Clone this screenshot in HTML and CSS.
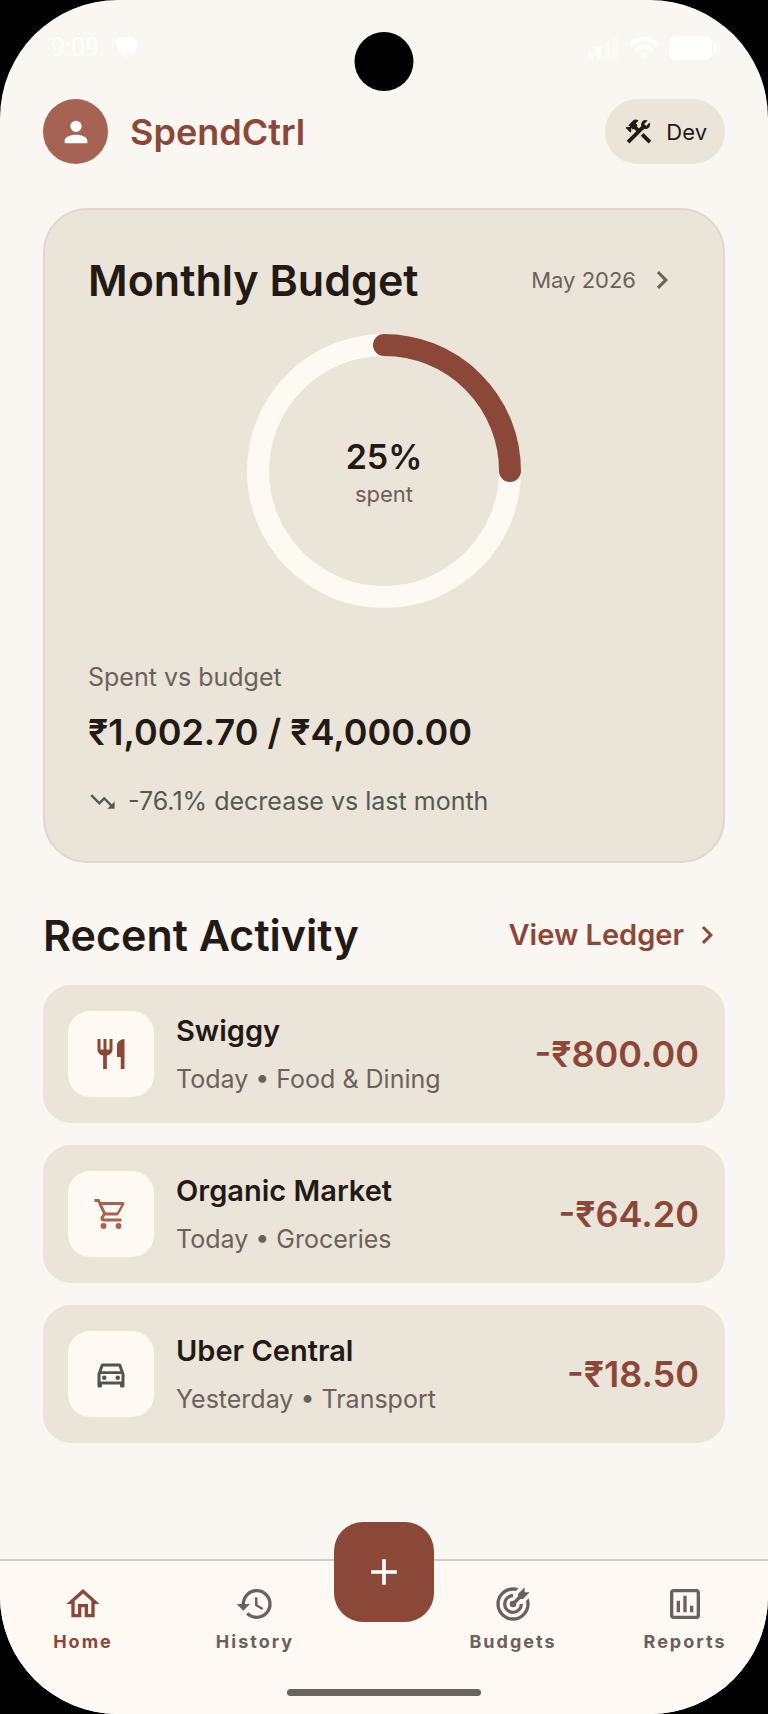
FILE: index.html
```html
<!DOCTYPE html>
<html lang="en">
<head>
    <meta charset="UTF-8">
    <meta name="viewport" content="width=device-width, initial-scale=1.0">
    <title>SpendCtrl</title>
    <link rel="stylesheet" href="styles.css">
</head>
<body>
    <div class="screen">

        <!-- Status bar -->
        <div class="status-bar">
            <span class="clock">9:09</span>
            <svg class="chat-icon" width="24" height="24" viewBox="0 0 24 24"><path d="M1 7C2 3 6 1 11 1h5c4 0 7 4 7 8s-3 8-7 8h-3v5l-6-5C4 15 3 12 3 8L1 7z"/></svg>
            <svg class="signal-icon" width="32" height="24" viewBox="0 0 32 24">
                <rect x="1" y="14" width="5" height="9" rx="2"/>
                <rect x="9" y="10" width="5" height="13" rx="2"/>
                <rect class="faint" x="18" y="5" width="5" height="18" rx="2"/>
                <rect class="faint" x="26" y="1" width="5" height="22" rx="2"/>
            </svg>
            <svg class="wifi-icon" width="30" height="24" viewBox="0 0 30 24">
                <path d="M3 7.500C10 1 20 1 27 7.500M8 13.500c4-4 10-4 14 0" fill="none" stroke="#fff" stroke-width="4" stroke-linecap="round"/>
                <circle cx="15" cy="20" r="3"/>
            </svg>
            <svg class="battery-icon" width="48" height="24" viewBox="0 0 48 24">
                <rect x="0" y="0" width="43" height="24" rx="7"/>
                <path d="M45 7c2 0 3 2 3 5s-1 5-3 5z"/>
            </svg>
        </div>
        <div class="camera"></div>

        <header class="app-header">
            <button class="avatar" aria-label="Profile">
                <svg width="34" height="34" viewBox="0 0 24 24"><path d="M12 4a4 4 0 1 1 0 8 4 4 0 0 1 0-8zm0 10c4.420 0 8 1.790 8 4v2H4v-2c0-2.210 3.580-4 8-4z"/></svg>
            </button>
            <h1>SpendCtrl</h1>
            <button class="dev-button">
                <svg width="31" height="31" viewBox="0 0 24 24"><path d="M13.780 15.300L19.780 21.300L21.890 19.140L15.890 13.140L13.780 15.300M17.500 10.100C17.110 10.100 16.690 10.050 16.360 9.910L4.970 21.250L2.860 19.140L10.270 11.740L8.500 9.960L7.780 10.660L6.330 9.250V12.110L5.630 12.810L2.110 9.250L2.810 8.550H5.620L4.220 7.140L7.780 3.580C8.950 2.410 10.830 2.410 12 3.580L9.890 5.740L11.300 7.140L10.590 7.850L12.380 9.630L14.200 7.750C14.060 7.420 14 7 14 6.630C14 4.660 15.560 3.110 17.500 3.110C18.090 3.110 18.610 3.250 19.080 3.530L16.410 6.200L17.910 7.700L20.580 5.030C20.860 5.500 21 6 21 6.630C21 8.550 19.450 10.100 17.500 10.100Z"/></svg>
                Dev
            </button>
        </header>

        <main>
            <!-- Monthly budget -->
            <section class="budget-card">
                <div class="section-head">
                    <h2>Monthly Budget</h2>
                    <button class="month-button">
                        May 2026
                        <svg width="36" height="36" viewBox="0 0 24 24"><path d="M8.590 16.580L13.170 12L8.590 7.410L10 6L16 12L10 18Z"/></svg>
                    </button>
                </div>

                <div class="ring">
                    <svg width="274" height="274" viewBox="0 0 274 274">
                        <circle class="ring-track" cx="137" cy="137" r="126"/>
                        <path class="ring-value" d="M137 11A126 126 0 0 1 263 137"/>
                    </svg>
                    <div class="ring-text">
                        <strong>25%</strong>
                        <span>spent</span>
                    </div>
                </div>

                <p class="spent-label">Spent vs budget</p>
                <p class="spent-total">₹1,002.70 / ₹4,000.00</p>
                <p class="trend">
                    <svg width="29" height="29" viewBox="0 0 24 24"><path d="M16 18L18.290 15.710L13.410 10.830L9.410 14.830L2 7.410L3.410 6L9.410 12L13.410 8L19.710 14.290L22 12V18H16Z"/></svg>
                    -76.1% decrease vs last month
                </p>
            </section>

            <!-- Recent activity -->
            <section class="activity">
                <div class="section-head">
                    <h2>Recent Activity</h2>
                    <a class="ledger-link" href="#">
                        View Ledger
                        <svg width="36" height="36" viewBox="0 0 24 24"><path d="M8.590 16.580L13.170 12L8.590 7.410L10 6L16 12L10 18Z"/></svg>
                    </a>
                </div>

                <ul class="activity-list">
                    <li class="activity-row">
                        <span class="tile food">
                            <svg width="36" height="36" viewBox="0 0 24 24"><path d="M11 9H9V2H7V9H5V2H3V9C3 11.120 4.660 12.840 6.750 12.970V22H9.250V12.970C11.340 12.840 13 11.120 13 9V2H11V9M16 6V14H18.500V22H21V2C18.240 2 16 4.240 16 6Z"/></svg>
                        </span>
                        <div class="details">
                            <h3>Swiggy</h3>
                            <p>Today • Food &amp; Dining</p>
                        </div>
                        <span class="amount">-₹800.00</span>
                    </li>
                    <li class="activity-row">
                        <span class="tile groceries">
                            <svg width="36" height="36" viewBox="0 0 24 24"><path d="M17 18A2 2 0 0 1 19 20A2 2 0 0 1 17 22C15.890 22 15 21.100 15 20C15 18.890 15.890 18 17 18M1 2H4.270L5.210 4H20A1 1 0 0 1 21 5C21 5.170 20.950 5.340 20.880 5.500L17.300 11.970C16.960 12.580 16.300 13 15.550 13H8.100L7.200 14.630L7.170 14.750A.25 .25 0 0 0 7.420 15H19V17H7C5.890 17 5 16.100 5 15C5 14.650 5.090 14.320 5.240 14.040L6.600 11.590L3 4H1V2M7 18A2 2 0 0 1 9 20A2 2 0 0 1 7 22C5.890 22 5 21.100 5 20C5 18.890 5.890 18 7 18M16 11L18.780 6H6.140L8.500 11H16Z"/></svg>
                        </span>
                        <div class="details">
                            <h3>Organic Market</h3>
                            <p>Today • Groceries</p>
                        </div>
                        <span class="amount">-₹64.20</span>
                    </li>
                    <li class="activity-row">
                        <span class="tile transport">
                            <svg width="36" height="36" viewBox="0 0 24 24"><path fill-rule="evenodd" d="M18.920 6.010C18.720 5.420 18.160 5 17.500 5h-11c-.66 0-1.210 .42-1.420 1.010L3 12v8c0 .55 .45 1 1 1h1c.55 0 1-.45 1-1v-1h12v1c0 .55 .45 1 1 1h1c.55 0 1-.45 1-1v-8zM6.850 7h10.290l1.080 3.110H5.770zM19 17H5v-5h14z"/><circle cx="7.500" cy="14.500" r="1.500"/><circle cx="16.500" cy="14.500" r="1.500"/></svg>
                        </span>
                        <div class="details">
                            <h3>Uber Central</h3>
                            <p>Yesterday • Transport</p>
                        </div>
                        <span class="amount">-₹18.50</span>
                    </li>
                </ul>
            </section>
        </main>

        <!-- Bottom navigation -->
        <footer class="bottom-bar">
            <nav class="tabs">
                <a class="tab active" href="#">
                    <svg width="40" height="40" viewBox="0 0 24 24"><path d="M12 5.690L17 10.190V18H15V12H9V18H7V10.190L12 5.690M12 3L2 12H5V20H11V14H13V20H19V12H22"/></svg>
                    Home
                </a>
                <a class="tab" href="#">
                    <svg width="40" height="40" viewBox="0 0 24 24"><path d="M13.500 8H12V13L16.280 15.540L17 14.330L13.500 12.250V8M13 3A9 9 0 0 0 4 12H1L4.960 16.030L9 12H6A7 7 0 0 1 13 5A7 7 0 0 1 20 12A7 7 0 0 1 13 19C11.070 19 9.320 18.210 8.060 16.940L6.640 18.360C8.270 20 10.500 21 13 21A9 9 0 0 0 22 12A9 9 0 0 0 13 3"/></svg>
                    History
                </a>
                <button class="add-button" aria-label="Add expense">
                    <svg width="44" height="44" viewBox="0 0 24 24"><path d="M19 13H13V19H11V13H5V11H11V5H13V11H19V13Z"/></svg>
                </button>
                <a class="tab" href="#">
                    <svg width="40" height="40" viewBox="0 0 24 24"><path d="M12 2A10 10 0 0 0 2 12A10 10 0 0 0 12 22A10 10 0 0 0 22 12C22 10.840 21.790 9.690 21.390 8.610L19.790 10.210C19.930 10.800 20 11.400 20 12A8 8 0 0 1 12 20A8 8 0 0 1 4 12A8 8 0 0 1 12 4C12.600 4 13.200 4.070 13.790 4.210L15.400 2.600C14.310 2.210 13.160 2 12 2M19 2L15 6V7.500L12.450 10.050C12.300 10 12.150 10 12 10A2 2 0 0 0 10 12A2 2 0 0 0 12 14A2 2 0 0 0 14 12C14 11.850 14 11.700 13.950 11.550L16.500 9H18L22 5H19V2M12 6A6 6 0 0 0 6 12A6 6 0 0 0 12 18A6 6 0 0 0 18 12H16A4 4 0 0 1 12 16A4 4 0 0 1 8 12A4 4 0 0 1 12 8V6Z"/></svg>
                    Budgets
                </a>
                <a class="tab" href="#">
                    <svg width="40" height="40" viewBox="0 0 24 24"><path fill-rule="evenodd" d="M9 17H7V10H9V17M13 17H11V7H13V17M17 17H15V13H17V17M19 19H5V5H19V19M19 3H5C3.900 3 3 3.900 3 5V19C3 20.100 3.900 21 5 21H19C20.100 21 21 20.100 21 19V5C21 3.900 20.100 3 19 3Z"/></svg>
                    Reports
                </a>
            </nav>
            <div class="home-indicator"></div>
        </footer>
    </div>
</body>
</html>
```

FILE: styles.css
```css
* {
    box-sizing: border-box;
}
body {
    margin: 0;
    background-color: #000;
    color: #231a16;
    font-family: Inter, "Liberation Sans", sans-serif;
    font-size: 25px;
    line-height: 36px;
}
h1, h2, h3, p, ul {
    margin: 0;
    padding: 0;
}
button {
    padding: 0;
    border: none;
    background: none;
    color: inherit;
    font: inherit;
    cursor: pointer;
}
a {
    color: inherit;
    text-decoration: none;
}
svg {
    display: block;
    flex-shrink: 0;
    fill: currentColor;
}
.screen {
    position: relative;
    display: flex;
    flex-direction: column;
    min-height: 100vh;
    overflow: hidden;
    border-radius: 118px;
    background-color: #faf6f1;
}

/* status bar */
.status-bar {
    display: flex;
    align-items: center;
    height: 99px;
    padding: 0 51px 4px;
    color: #fff;
    font-family: Roboto, sans-serif;
}
.chat-icon {
    margin-left: 15px;
}
.signal-icon {
    margin-left: auto;
}
.signal-icon .faint {
    opacity: 0.4;
}
.wifi-icon {
    margin: 0 10px 0 10px;
}
.camera {
    position: absolute;
    top: 32px;
    left: 50%;
    width: 59px;
    height: 59px;
    border-radius: 50%;
    background-color: #000;
    transform: translateX(-50%);
}

/* header */
.app-header {
    display: flex;
    align-items: center;
    padding: 0 43px;
}
.avatar {
    display: grid;
    place-items: center;
    width: 65px;
    height: 65px;
    border-radius: 50%;
    background-color: #a66252;
    color: #fff;
}
h1 {
    margin-left: 22px;
    color: #8b4838;
    font-size: 36px;
    font-weight: 600;
    line-height: 48px;
}
.dev-button {
    display: flex;
    align-items: center;
    gap: 12px;
    height: 65px;
    margin-left: auto;
    padding: 0 18px;
    border-radius: 33px;
    background-color: #ebe4d9;
    font-size: 22px;
}

/* main */
main {
    flex: 1;
    padding: 44px 43px 72px;
}
.section-head {
    display: flex;
    align-items: center;
    justify-content: space-between;
}
h2 {
    font-size: 43px;
    font-weight: 600;
    line-height: 56px;
}
.budget-card {
    padding: 42px 43px;
    border: 2px solid #e2d6cd;
    border-radius: 44px;
    background-color: #ebe4d9;
}
.month-button {
    display: flex;
    align-items: center;
    gap: 8px;
    color: #6b615b;
    font-size: 22px;
}
.ring {
    display: grid;
    place-items: center;
    margin: 26px 0 51px;
}
.ring > * {
    grid-area: 1 / 1;
}
.ring-track, .ring-value {
    fill: none;
    stroke: #fff9f4;
    stroke-width: 22;
}
.ring-value {
    stroke: #8b4838;
    stroke-linecap: round;
}
.ring-text {
    display: flex;
    flex-direction: column;
    align-items: center;
    padding-top: 2px;
}
.ring-text strong {
    font-size: 34px;
    font-weight: 600;
    line-height: 44px;
}
.ring-text span {
    color: #6b615b;
    font-size: 22px;
    line-height: 30px;
}
.spent-label {
    color: #6b615b;
}
.spent-total {
    margin: 13px 0 27px;
    font-size: 36px;
    font-weight: 600;
    line-height: 48px;
}
.trend {
    display: flex;
    align-items: center;
    gap: 11px;
    color: #535a52;
}

/* activity */
.activity {
    margin-top: 44px;
}
.ledger-link {
    display: flex;
    align-items: center;
    gap: 5px;
    color: #8b4838;
    font-size: 29px;
    font-weight: 600;
}
.activity-list {
    display: grid;
    gap: 22px;
    margin-top: 22px;
    list-style: none;
}
.activity-row {
    display: flex;
    align-items: center;
    gap: 22px;
    height: 138px;
    padding: 0 26px 0 25px;
    border-radius: 28px;
    background-color: #ebe4d9;
}
.tile {
    display: grid;
    place-items: center;
    width: 86px;
    height: 86px;
    border-radius: 22px;
    background-color: #fff9f4;
}
.food {
    color: #8b4838;
}
.groceries {
    color: #a66252;
}
.transport {
    color: #4f564d;
}
.details {
    display: grid;
    flex: 1;
    gap: 12px;
    padding-top: 2px;
}
h3 {
    font-size: 29px;
    font-weight: 600;
}
.details p {
    color: #6b615b;
}
.amount {
    color: #8b4838;
    font-size: 36px;
    font-weight: 600;
}

/* bottom bar */
.bottom-bar {
    padding: 23px 0 18px;
    border-top: 2px solid #d8ccc4;
    background-color: #fff9f4;
}
.tabs {
    display: grid;
    grid-template-columns: 2fr 2fr 1fr 2fr 2fr;
    height: 70px;
    margin: 0 -3px;
}
.tab {
    display: flex;
    flex-direction: column;
    align-items: center;
    gap: 6px;
    color: #6b615b;
    font-size: 18px;
    font-weight: 700;
    line-height: 24px;
    letter-spacing: 2px;
}
.tab.active {
    color: #8b4838;
}
.add-button {
    display: grid;
    place-items: center;
    justify-self: center;
    width: 100px;
    height: 100px;
    margin: -62px -8px 0;
    border-radius: 29px;
    background-color: #8b4838;
    color: #fff;
}
.home-indicator {
    width: 194px;
    height: 7px;
    margin: 35px auto 0;
    border-radius: 4px;
    background-color: #6b635d;
}
```
